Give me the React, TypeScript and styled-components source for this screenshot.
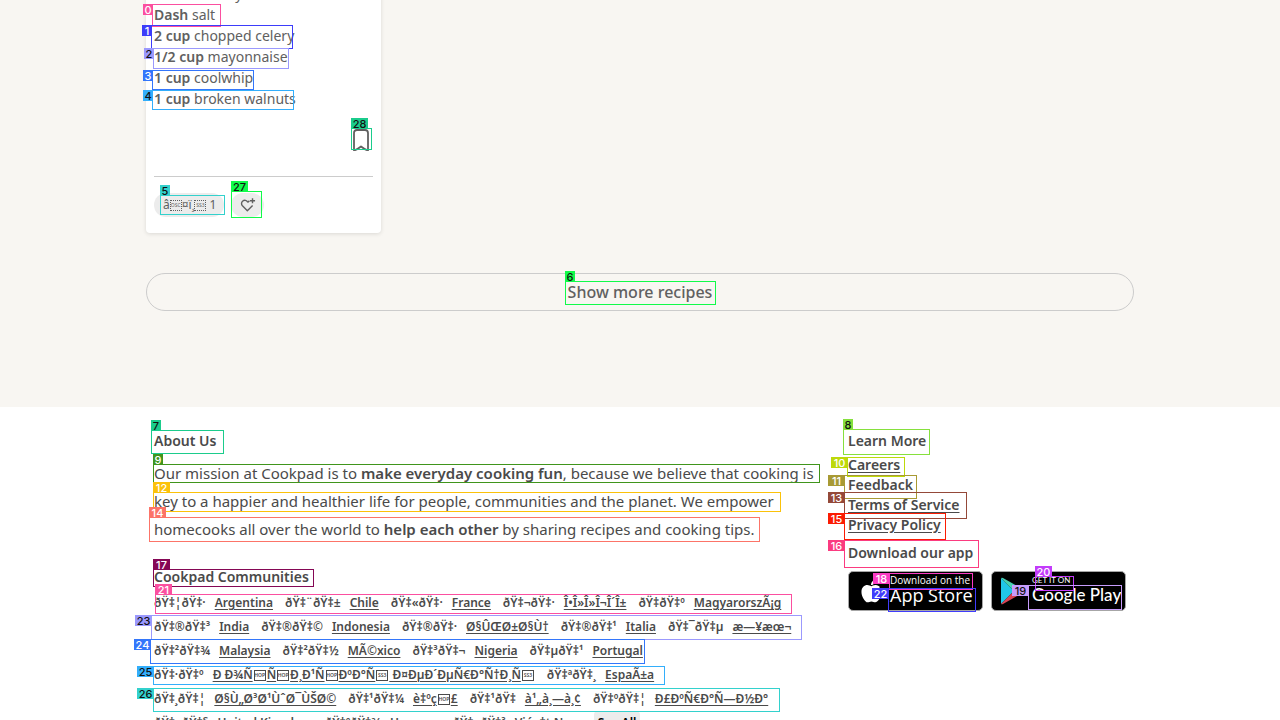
import React from "react";
import styled, { createGlobalStyle } from "styled-components";
import { FaApple } from "react-icons/fa";

const GlobalStyle = createGlobalStyle`
  * { box-sizing: border-box; }
  body {
    margin: 0;
    background: #ffffff;
    color: #4a4a4a;
    font-family: "Noto Sans", "Open Sans", sans-serif;
  }
  ul { list-style: none; margin: 0; padding: 0; }
  h2, p { margin: 0; }
  button { font-family: inherit; cursor: pointer; }
`;

const Page = styled.div`
  position: relative;
  height: 100vh;
  overflow: hidden;
`;

const Results = styled.main`
  display: flow-root;
  background: #f8f6f2;
  padding-bottom: 96px;
`;

const Container = styled.div`
  max-width: 988px;
  margin: 0 auto;
`;

const Card = styled.article`
  width: 235px;
  margin-top: -17px;
  margin-bottom: 40px;
  padding: 0 8px 16px;
  background: #ffffff;
  border-radius: 4px;
  box-shadow: 0 1px 4px rgba(0, 0, 0, 0.12);
`;

const Ingredient = styled.li`
  font-size: 14px;
  line-height: 21px;
  color: #606060;
  white-space: nowrap;

  b { font-weight: 600; }
`;

const CardTools = styled.div`
  display: flex;
  justify-content: flex-end;
  padding: 20px 4px 25px 0;
  border-bottom: 1px solid #cccccc;
`;

const IconButton = styled.button`
  display: flex;
  padding: 0;
  border: 0;
  background: none;
  color: #606060;
`;

const Reactions = styled.div`
  display: flex;
  gap: 7px;
  padding-top: 16px;
`;

const Pill = styled.button`
  display: flex;
  align-items: center;
  justify-content: center;
  height: 24px;
  padding: 0 8px 0 9px;
  border: 0;
  border-radius: 12px;
  background: #ececec;
  color: #606060;
  font-size: 12px;
  line-height: 24px;
  white-space: pre;
`;

const ControlBox = styled.span`
  display: inline-flex;
  align-items: center;
  justify-content: center;
  width: 12px;
  height: 11px;
  border: 1px dotted currentColor;
  font-size: 5px;
  line-height: 9px;
  vertical-align: middle;
`;

const MoreButton = styled.button`
  display: block;
  width: 100%;
  height: 38px;
  padding: 0;
  border: 1px solid #cccccc;
  border-radius: 19px;
  background: transparent;
  color: #606060;
  font-size: 16px;
  font-weight: 500;
  line-height: 36px;
`;

const Footer = styled.footer`
  background: #ffffff;
  padding-top: 24px;
`;

const FooterGrid = styled(Container)`
  display: grid;
  grid-template-columns: 1fr 278px;
  gap: 24px;
  padding: 0 8px;
`;

const Heading = styled.h2`
  font-size: 14px;
  font-weight: 600;
  line-height: 20px;
`;

const Mission = styled.p`
  margin: 8px 0 24px;
  font-size: 15px;
  line-height: 28px;

  b { font-weight: 600; }
`;

const Communities = styled.ul`
  display: flex;
  flex-wrap: wrap;
  column-gap: 12px;
  margin-top: 4px;
  font-size: 12px;
  font-weight: 600;
  line-height: 24px;
  white-space: pre;

  ${ControlBox} {
    margin: 0 1px;
    border-style: solid;
  }
`;

const Community = styled.li`
  display: flex;
  gap: 9px;
  height: 24px;
`;

const TextLink = styled.a`
  color: inherit;
  text-decoration: underline;
  text-underline-offset: 2px;
`;

const SeeAll = styled.button`
  height: 24px;
  padding: 0 4px;
  border: 0;
  border-radius: 4px;
  background: #ececec;
  color: #000000;
  font-size: 12px;
  font-weight: 600;
  line-height: 24px;
`;

const Links = styled.ul`
  margin: 4px 0 8px;
  font-size: 14px;
  font-weight: 600;
  line-height: 20px;
`;

const Badges = styled.div`
  display: grid;
  grid-template-columns: repeat(2, minmax(0, 1fr));
  gap: 8px;
  margin-top: 8px;
`;

const Badge = styled.a<{ $face: string; $small: number; $large: number }>`
  display: flex;
  align-items: center;
  gap: 6px;
  height: 40px;
  padding-left: 9px;
  border: 1px solid #a6a6a6;
  border-radius: 5px;
  background: #000000;
  color: #ffffff;
  font-family: ${(p) => p.$face}, sans-serif;
  text-decoration: none;
  white-space: nowrap;

  small { font-size: ${(p) => p.$small}px; line-height: 12px; }
  strong { font-size: ${(p) => p.$large}px; font-weight: 500; line-height: 18px; }
`;

const BadgeText = styled.span`
  display: flex;
  flex-direction: column;
  padding-bottom: 4px;
`;

const Overlay = styled.div`
  position: absolute;
  inset: 0;
  pointer-events: none;
`;

const Outline = styled.div<{ $x: number; $y: number; $w: number; $h: number; $c: string }>`
  position: absolute;
  left: ${(p) => p.$x}px;
  top: ${(p) => p.$y}px;
  width: ${(p) => p.$w}px;
  height: ${(p) => p.$h}px;
  border: 1px solid ${(p) => p.$c};
`;

const Tag = styled.span<{ $side?: boolean; $c: string; $dark?: boolean; $wide: boolean }>`
  position: absolute;
  top: ${(p) => (p.$side ? "-1px" : "-11px")};
  ${(p) => (p.$side ? "right: 100%;" : "left: -1px;")}
  width: ${(p) => (p.$wide ? 17 : 10)}px;
  height: 11px;
  background: ${(p) => p.$c};
  color: ${(p) => (p.$dark ? "#101010" : "#ffffff")};
  font-family: Inter, sans-serif;
  font-size: 11px;
  font-weight: 500;
  line-height: 12px;
  text-align: center;
`;

type Mark = [id: number, x: number, y: number, right: number, bottom: number, color: string, dark?: boolean, side?: boolean];

const marks: Mark[] = [
  [0, 152, 4, 221, 27, "#fb4fa0", false, true],
  [1, 151, 25, 293, 49, "#3d3dfa", false, true],
  [2, 153, 48, 289, 69, "#9b99fd", true, true],
  [3, 152, 70, 254, 90, "#3376fb", false, true],
  [4, 152, 90, 294, 110, "#33aefb", true, true],
  [28, 351, 128, 372, 150, "#1bcc8c", true],
  [5, 160, 195, 225, 215, "#33d1cd", true],
  [27, 231, 191, 262, 218, "#11fb4a", true],
  [6, 565, 281, 716, 305, "#11fb4a", true],
  [7, 151, 430, 224, 454, "#1bcc8c", true],
  [9, 153, 464, 820, 483, "#40951c"],
  [12, 153, 492, 781, 512, "#fbc20a"],
  [14, 149, 517, 760, 542, "#fc7468"],
  [8, 843, 429, 930, 455, "#86e03d", true],
  [10, 847, 457, 905, 477, "#bdd90a", false, true],
  [11, 844, 475, 917, 499, "#a89a34", false, true],
  [13, 844, 492, 967, 519, "#944939", false, true],
  [15, 844, 513, 946, 540, "#fb1c03", false, true],
  [16, 844, 540, 979, 568, "#fb3b80", false, true],
  [18, 889, 573, 973, 590, "#fb3bc4", false, true],
  [22, 888, 588, 976, 612, "#403cfb", false, true],
  [20, 1035, 576, 1074, 591, "#c33bfb"],
  [19, 1028, 585, 1122, 610, "#c79cfc", true, true],
  [17, 153, 569, 314, 587, "#850755"],
  [21, 155, 594, 792, 614, "#fb4fa0"],
  [23, 151, 615, 802, 640, "#9b99fd", true, true],
  [24, 150, 639, 645, 664, "#3376fb", false, true],
  [25, 153, 666, 665, 685, "#33aefb", true, true],
  [26, 153, 688, 780, 712, "#33d1cd", true, true],
];

const ingredients = [
  ["2 cans", "cherry"],
  ["Dash", "salt"],
  ["2 cup", "chopped celery"],
  ["1/2 cup", "mayonnaise"],
  ["1 cup", "coolwhip"],
  ["1 cup", "broken walnuts"],
];

const communities = [
  ["ðŸ‡¦ðŸ‡·", "Argentina"],
  ["ðŸ‡¨ðŸ‡±", "Chile"],
  ["ðŸ‡«ðŸ‡·", "France"],
  ["ðŸ‡¬ðŸ‡·", "Î•Î»Î»Î¬Î´Î±"],
  ["ðŸ‡\u00adðŸ‡º", "MagyarorszÃ¡g"],
  ["ðŸ‡®ðŸ‡³", "India"],
  ["ðŸ‡®ðŸ‡©", "Indonesia"],
  ["ðŸ‡®ðŸ‡·", "Ø§ÛŒØ±Ø§Ù†"],
  ["ðŸ‡®ðŸ‡¹", "Italia"],
  ["ðŸ‡¯ðŸ‡µ", "æ—¥æœ¬"],
  ["ðŸ‡²ðŸ‡¾", "Malaysia"],
  ["ðŸ‡²ðŸ‡½", "MÃ©xico"],
  ["ðŸ‡³ðŸ‡¬", "Nigeria"],
  ["ðŸ‡µðŸ‡¹", "Portugal"],
  ["ðŸ‡·ðŸ‡º", "Ð\u00a0Ð¾Ñ\u0081Ñ\u0081Ð¸Ð¹Ñ\u0081ÐºÐ°Ñ\u008f Ð¤ÐµÐ´ÐµÑ€Ð°Ñ†Ð¸Ñ\u008f"],
  ["ðŸ‡ªðŸ‡¸", "EspaÃ±a"],
  ["ðŸ‡¸ðŸ‡¦", "Ø§Ù„Ø³Ø¹ÙˆØ¯ÙŠØ©"],
  ["ðŸ‡¹ðŸ‡¼", "è‡ºç\u0081£"],
  ["ðŸ‡¹ðŸ‡\u00ad", "à¹„à¸—à¸¢"],
  ["ðŸ‡ºðŸ‡¦", "Ð£ÐºÑ€Ð°Ñ—Ð½Ð°"],
  ["ðŸ‡¬ðŸ‡§", "United Kingdom"],
  ["ðŸ‡ºðŸ‡¾", "Uruguay"],
  ["ðŸ‡»ðŸ‡³", "Viá»‡t Nam"],
];

const controlNames: Record<string, string> = { "\u0081": "HOP", "\u008f": "SS3", "\u009d": "OSC" };

/* Shows C1 control characters as small boxes that hold their abbreviation. */
const RawText = ({ text }: { text: string }) => (
  <span>
    {text.split(/([\u0081\u008f\u009d])/).map((part, i) =>
      controlNames[part] ? <ControlBox key={i}>{controlNames[part]}</ControlBox> : part,
    )}
  </span>
);

const BookmarkIcon = () => (
  <svg width="16" height="22" viewBox="0 0 16 22" fill="none" stroke="currentColor" strokeWidth="1.800" strokeLinejoin="round">
    <path d="M1 21.500V4a3 3 0 0 1 3-3h8a3 3 0 0 1 3 3v17.500c-2-.6-4.500-2-7-4-2.500 2-5 3.400-7 4Z" />
  </svg>
);

const HeartPlusIcon = () => (
  <svg width="16" height="16" viewBox="0 0 17 16" fill="none" stroke="currentColor" strokeWidth="1.500" strokeLinejoin="round">
    <path d="M8.400 5.200C7 2.900 4.600 2.500 3 3.700 1.300 5 1.200 7.400 2.600 8.900L7.800 14 13.400 8.600" />
    <path d="M8.400 5.200 10 3.600M13.300 .8v5.400M10.600 3.500H16" />
  </svg>
);

const PlayIcon = () => (
  <svg width="25" height="28" viewBox="0 0 25 28">
    <path d="M0 1v26l13-13Z" fill="#20c6e8" />
    <path d="M0 1l13 13 5-4L2 1Q1 .4 0 1Z" fill="#48d0b0" />
    <path d="M0 27l13-13 5 4L2 27Q1 27.600 0 27Z" fill="#d94455" />
    <path d="M13 14l5-4 6 3q1 1 0 2l-6 3Z" fill="#e8b53c" />
  </svg>
);

export default function App() {
  return (
    <Page>
      <GlobalStyle />
      <Results>
        <Container>
          <Card>
            <ul>
              {ingredients.map(([amount, name]) => (
                <Ingredient key={amount + name}>
                  <b>{amount}</b> {name}
                </Ingredient>
              ))}
            </ul>
            <CardTools>
              <IconButton aria-label="Save recipe"><BookmarkIcon /></IconButton>
            </CardTools>
            <Reactions>
              <Pill><RawText text={"â\u009d¤ï¸\u008f 1"} /></Pill>
              <Pill aria-label="Add reaction"><HeartPlusIcon /></Pill>
            </Reactions>
          </Card>
          <MoreButton>Show more recipes</MoreButton>
        </Container>
      </Results>
      <Footer>
        <FooterGrid>
          <section>
            <Heading>About Us</Heading>
            <Mission>
              Our mission at Cookpad is to <b>make everyday cooking fun</b>, because we believe that cooking is key to a
              happier and healthier life for people, communities and the planet. We empower homecooks all over the world
              to <b>help each other</b> by sharing recipes and cooking tips.
            </Mission>
            <Heading>Cookpad Communities</Heading>
            <Communities>
              {communities.map(([flag, name]) => (
                <Community key={name}>
                  <span>{flag}</span>
                  <TextLink href="#"><RawText text={name} /></TextLink>
                </Community>
              ))}
              <li><SeeAll>See All</SeeAll></li>
            </Communities>
          </section>
          <section>
            <Heading>Learn More</Heading>
            <Links>
              {["Careers", "Feedback", "Terms of Service", "Privacy Policy"].map((label) => (
                <li key={label}><TextLink href="#">{label}</TextLink></li>
              ))}
            </Links>
            <Heading>Download our app</Heading>
            <Badges>
              <Badge href="#" $face='"Open Sans"' $small={10} $large={18}>
                <FaApple size={26} />
                <BadgeText><small>Download on the</small><strong>App Store</strong></BadgeText>
              </Badge>
              <Badge href="#" $face="Lato" $small={8} $large={17}>
                <PlayIcon />
                <BadgeText><small>GET IT ON</small><strong>Google Play</strong></BadgeText>
              </Badge>
            </Badges>
          </section>
        </FooterGrid>
      </Footer>
      <Overlay>
        {marks.map(([id, x, y, right, bottom, color, dark, side]) => (
          <Outline key={id} $x={x} $y={y} $w={right - x} $h={bottom - y} $c={color}>
            <Tag $c={color} $dark={dark} $side={side} $wide={id > 9}>{id}</Tag>
          </Outline>
        ))}
      </Overlay>
    </Page>
  );
}
